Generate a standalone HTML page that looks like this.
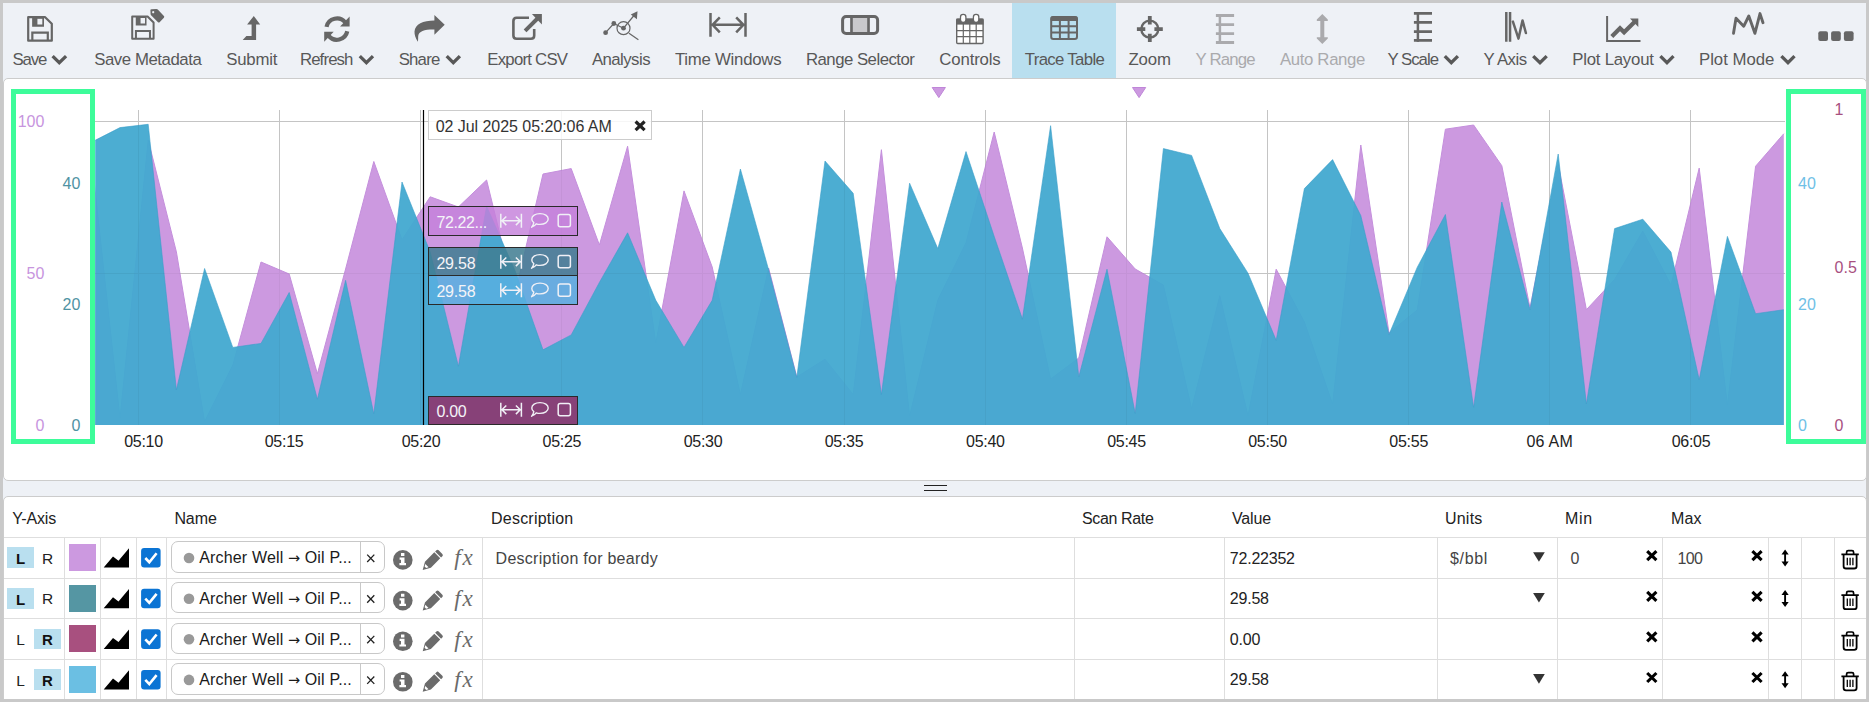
<!DOCTYPE html>
<html><head><meta charset="utf-8"><title>Trend</title>
<style>
html,body{margin:0;padding:0}
body{width:1869px;height:702px;overflow:hidden;background:#c9c9c9;position:relative;font-family:"Liberation Sans", sans-serif;}
.t{position:absolute;white-space:nowrap;line-height:20px;}
.abs{position:absolute}
svg{position:absolute;overflow:visible}
</style></head>
<body>
<div class="abs" style="left:3px;top:3px;width:1863px;height:696px;background:#eef1f6"></div>
<div class="abs" id="chartpanel" style="left:3px;top:78px;width:1864px;height:403px;box-sizing:border-box;background:#fff;border:1px solid #ccc;border-radius:5px;"></div>
<div class="abs" id="tablepanel" style="left:3px;top:496px;width:1864px;height:210px;box-sizing:border-box;background:#fff;border:1px solid #ccc;border-radius:5px 5px 0 0;"></div>
<div class="abs" style="left:924px;top:485px;width:23px;height:1px;background:#222"></div><div class="abs" style="left:924px;top:490px;width:23px;height:1px;background:#222"></div>
<div class="abs" style="left:0;top:699px;width:1869px;height:3px;background:#c9c9c9;z-index:50"></div>
<div class="abs" style="left:1012px;top:3px;width:104px;height:75px;background:#b9dfef"></div>
<svg style="left:0;top:0" width="1869" height="80"><path d="M52.6 56.1 L59.3 62.7 L66.1 56.1" fill="none" stroke="#585858" stroke-width="3.3" stroke-linecap="butt" stroke-linejoin="miter"/></svg>
<svg style="left:0;top:0" width="1869" height="80"><path d="M359.8 56.1 L366.4 62.7 L373.0 56.1" fill="none" stroke="#585858" stroke-width="3.3" stroke-linecap="butt" stroke-linejoin="miter"/></svg>
<svg style="left:0;top:0" width="1869" height="80"><path d="M446.7 56.1 L453.3 62.7 L459.9 56.1" fill="none" stroke="#585858" stroke-width="3.3" stroke-linecap="butt" stroke-linejoin="miter"/></svg>
<svg style="left:0;top:0" width="1869" height="80"><path d="M1444.8 56.1 L1451.3 62.7 L1457.9 56.1" fill="none" stroke="#585858" stroke-width="3.3" stroke-linecap="butt" stroke-linejoin="miter"/></svg>
<svg style="left:0;top:0" width="1869" height="80"><path d="M1533.2 56.1 L1540.0 62.7 L1546.7 56.1" fill="none" stroke="#585858" stroke-width="3.3" stroke-linecap="butt" stroke-linejoin="miter"/></svg>
<svg style="left:0;top:0" width="1869" height="80"><path d="M1660.4 56.1 L1667.0 62.7 L1673.5 56.1" fill="none" stroke="#585858" stroke-width="3.3" stroke-linecap="butt" stroke-linejoin="miter"/></svg>
<svg style="left:0;top:0" width="1869" height="80"><path d="M1781.4 56.1 L1788.0 62.7 L1794.5 56.1" fill="none" stroke="#585858" stroke-width="3.3" stroke-linecap="butt" stroke-linejoin="miter"/></svg>
<svg style="left:0;top:0" width="1869" height="80"><path d="M28.20 17.20 H45.16 L51.80 23.84 V40.70 H28.20 Z" fill="none" stroke="#666" stroke-width="2.20" stroke-linejoin="round"/><path d="M32.13 17.20 H44.00 V26.64 H32.13 Z M37.42 18.67 V24.58 H42.32 V18.67 Z" fill="#666" fill-rule="evenodd"/><path d="M32.33 40.70 V32.62 H47.80 V40.70" fill="none" stroke="#666" stroke-width="2.20"/><path d="M132.20 16.50 H147.58 L153.60 22.52 V38.70 H132.20 Z" fill="none" stroke="#666" stroke-width="2.00" stroke-linejoin="round"/><path d="M135.76 16.50 H146.53 V25.42 H135.76 Z M140.56 17.92 V23.49 H145.01 V17.92 Z" fill="#666" fill-rule="evenodd"/><path d="M135.94 38.70 V31.02 H149.97 V38.70" fill="none" stroke="#666" stroke-width="2.00"/><path d="M150.4 10.3 Q150.3 9.2 151.5 9.2 L156.4 9 Q157.2 9 157.8 9.6 L163.9 16 Q164.7 16.9 163.9 17.7 L159.6 22.2 Q158.8 23 158 22.2 L151.3 15.6 Q150.7 15 150.6 14.2 Z M153.2 11 A1.1 1.1 0 1 0 153.21 11 Z" fill="#666" fill-rule="evenodd"/><path d="M253.8 15.9 L260.2 24.6 H256.1 V40 H242.7 L246.4 36.1 H251.6 V24.6 H247.1 Z" fill="#666"/><path d="M326.53 26.90 A10.60 10.60 0 0 1 345.25 22.57" fill="none" stroke="#666" stroke-width="4.20"/><path d="M347.27 31.30 A10.60 10.60 0 0 1 328.55 35.63" fill="none" stroke="#666" stroke-width="4.20"/><path d="M349.6 16.4 V26.4 H340.1 Z" fill="#666"/><path d="M324.2 41.8 V31.8 H333.7 Z" fill="#666"/><path d="M434.4 15 L444.7 24.8 L434.4 34.8 V29.4 C425 29.2 418.6 31 418.2 36 C418.1 38 418.3 40 417.8 41.8 C415.5 38 414.4 35 414.5 31.6 C415 24 423 20.6 434.4 20.5 Z" fill="#666"/><path d="M529 17.7 H516.6 Q513.4 17.7 513.4 20.9 V35.5 Q513.4 38.7 516.6 38.7 H531 Q534.2 38.7 534.2 35.5 V29.1" fill="none" stroke="#666" stroke-width="2.6"/><path d="M525.1 30.9 L538 18" fill="none" stroke="#666" stroke-width="3.9"/><path d="M531.9 14.1 H541.9 V24.6 Z" fill="#666"/><path d="M605.6 32.7 L613.8 23.5 L623.5 28.2 L634 15.5 M629.0 33.2 L638.4 39.8" fill="none" stroke="#666" stroke-width="1.2"/><circle cx="605.6" cy="32.7" r="2.4" fill="#666"/><circle cx="613.8" cy="23.5" r="2.4" fill="#666"/><circle cx="623.5" cy="28.2" r="2.4" fill="#666"/><circle cx="623.5" cy="28.2" r="6.5" fill="none" stroke="#666" stroke-width="1.2"/><path d="M637.5 11.2 L630.8 14.6 L636.9 19.2 Z" fill="#666"/><path d="M710.5 13 V36.8 M745.5 13 V36.8 M712 24.8 H744 M719.8 17.3 L712.6 24.8 L719.8 32.3 M736.2 17.3 L743.4 24.8 L736.2 32.3" fill="none" stroke="#666" stroke-width="2.5" stroke-linejoin="miter"/><rect x="850.2" y="17" width="19.6" height="16" fill="#c9c9cc"/><rect x="842.6" y="16.5" width="35" height="17" rx="3.5" fill="none" stroke="#666" stroke-width="3"/><path d="M851.5 16.5 V33.5 M868.5 16.5 V33.5" stroke="#666" stroke-width="2.6" fill="none"/><rect x="956.7" y="19.2" width="26.4" height="24.3" rx="1" fill="#fff" stroke="#666" stroke-width="1.4"/><rect x="956.3" y="18.6" width="27.2" height="6" fill="#666"/><path d="M956.7 30.6 H983 M956.7 36.6 H983 M963.3 24 V43.5 M969.8 24 V43.5 M976.2 24 V43.5" stroke="#666" stroke-width="1.2" fill="none"/><rect x="960.5" y="14.3" width="5.4" height="8" rx="2.6" fill="#fff" stroke="#666" stroke-width="1.3"/><rect x="973.4" y="14.3" width="5.4" height="8" rx="2.6" fill="#fff" stroke="#666" stroke-width="1.3"/><rect x="1051.2" y="17.1" width="25.8" height="21.9" rx="2.2" fill="none" stroke="#666" stroke-width="2"/><rect x="1050.6" y="16.3" width="27" height="4.6" rx="1.5" fill="#666"/><path d="M1051 26.3 H1077 M1051 32.6 H1077 M1059.9 20 V39 M1068.6 20 V39" stroke="#666" stroke-width="2" fill="none"/><circle cx="1149.8" cy="29.1" r="8.5" fill="none" stroke="#666" stroke-width="2.4"/><path d="M1149.8 16.1 V24.4 M1149.8 33.8 V41.9 M1136.9 29.1 H1145.3 M1154.4 29.1 H1162.8" stroke="#666" stroke-width="3.8" fill="none"/><path d="M1219.9 14.1 V43.9" stroke="#aaaaad" stroke-width="2.5" fill="none"/><path d="M1215.9 15.55 H1234.1 M1215.9 24.6 H1234.1 M1215.9 33.6 H1234.1 M1215.9 42.5 H1234.1" stroke="#aaaaad" stroke-width="2.9" fill="none"/><path d="M1322.3 14.1 L1327.8 19.6 V21 H1324.3 V37.2 H1327.8 V38.6 L1322.3 44.1 L1316.8 38.6 V37.2 H1320.3 V21 H1316.8 V19.6 Z" fill="#aaaaad"/><path d="M1417.9 12.1 V41.8" stroke="#666" stroke-width="2.5" fill="none"/><path d="M1413.9 13.45 H1432 M1413.9 22.45 H1432 M1413.9 31.55 H1432 M1413.9 40.45 H1432" stroke="#666" stroke-width="2.8" fill="none"/><path d="M1506.3 12.1 V41.8 M1510.05 12.1 V41.8" stroke="#666" stroke-width="2.5" fill="none"/><path d="M1512.9 21.6 L1518.5 38.6 L1522.5 20.4 L1525.9 33" stroke="#666" stroke-width="2.5" fill="none" stroke-linecap="round" stroke-linejoin="round"/><path d="M1607.1 16.1 V40.9 H1640.5" stroke="#666" stroke-width="2" fill="none"/><path d="M1611.8 36.4 L1620 28.2 L1624.1 32.3 L1635 21.6" stroke="#666" stroke-width="4.2" fill="none"/><path d="M1630 18.6 H1638.3 V26.9 Z" fill="#666"/><path d="M1733.5 33.3 L1736 18.3 L1743.7 26.3 L1748.8 16 L1754.9 33.3 L1760 13.6 L1763 22.7" stroke="#666" stroke-width="2.9" fill="none" stroke-linecap="round" stroke-linejoin="round"/><rect x="1818.3" y="31.2" width="9.7" height="9.8" rx="2" fill="#666"/><rect x="1831.1" y="31.2" width="9.7" height="9.8" rx="2" fill="#666"/><rect x="1843.9" y="31.2" width="9.7" height="9.8" rx="2" fill="#666"/></svg>
<div class="abs" style="left:11px;top:89px;width:84px;height:354.5px;box-sizing:border-box;border:5px solid #3dfc9a"></div>
<div class="abs" style="left:1786px;top:89px;width:80px;height:354.5px;box-sizing:border-box;border:5px solid #3dfc9a"></div>
<svg style="left:0;top:0" width="1869" height="480"><path d="M138.5 110 V425 M279.5 110 V425 M420.5 110 V425 M561.5 110 V425 M702.5 110 V425 M844.5 110 V425 M985.5 110 V425 M1126.5 110 V425 M1267.5 110 V425 M1408.5 110 V425 M1549.5 110 V425 M1690.5 110 V425 M95 121.5 H1785 M95 273.5 H1785" stroke="#cccccc" stroke-width="1" fill="none" shape-rendering="crispEdges"/><clipPath id="cp"><rect x="95.2" y="100" width="1689.8" height="325.0"/></clipPath><g clip-path="url(#cp)"><polygon points="91.8,160.0 120.0,418.0 148.2,140.0 176.4,251.9 204.6,421.5 232.8,365.0 261.0,262.0 289.2,274.0 317.4,373.8 345.6,269.0 373.8,161.5 402.0,239.7 430.2,196.8 458.4,207.0 486.6,180.0 514.8,295.0 543.0,174.0 571.2,168.6 599.4,245.0 627.6,146.2 655.8,343.0 684.0,190.9 712.2,267.0 740.4,394.5 768.6,268.0 796.8,377.0 825.0,359.2 853.2,394.5 881.4,149.7 909.6,416.0 937.8,300.0 966.0,242.7 994.2,132.0 1022.4,248.0 1050.6,379.0 1078.8,358.0 1107.0,236.8 1135.2,269.0 1163.4,285.0 1191.6,408.6 1219.8,295.6 1248.0,415.7 1276.2,269.2 1304.4,322.0 1332.6,404.0 1360.8,145.0 1389.0,333.0 1417.2,310.0 1445.4,129.2 1473.6,125.0 1501.8,165.7 1530.0,308.0 1558.2,164.0 1586.4,309.7 1614.6,279.4 1642.8,231.0 1671.0,285.0 1699.2,168.1 1727.4,405.0 1755.6,166.2 1783.8,133.7 1783.8,425.0 91.8,425.0" fill="#cc99e0"/><polyline points="91.8,160.0 120.0,418.0 148.2,140.0 176.4,251.9 204.6,421.5 232.8,365.0 261.0,262.0 289.2,274.0 317.4,373.8 345.6,269.0 373.8,161.5 402.0,239.7 430.2,196.8 458.4,207.0 486.6,180.0 514.8,295.0 543.0,174.0 571.2,168.6 599.4,245.0 627.6,146.2 655.8,343.0 684.0,190.9 712.2,267.0 740.4,394.5 768.6,268.0 796.8,377.0 825.0,359.2 853.2,394.5 881.4,149.7 909.6,416.0 937.8,300.0 966.0,242.7 994.2,132.0 1022.4,248.0 1050.6,379.0 1078.8,358.0 1107.0,236.8 1135.2,269.0 1163.4,285.0 1191.6,408.6 1219.8,295.6 1248.0,415.7 1276.2,269.2 1304.4,322.0 1332.6,404.0 1360.8,145.0 1389.0,333.0 1417.2,310.0 1445.4,129.2 1473.6,125.0 1501.8,165.7 1530.0,308.0 1558.2,164.0 1586.4,309.7 1614.6,279.4 1642.8,231.0 1671.0,285.0 1699.2,168.1 1727.4,405.0 1755.6,166.2 1783.8,133.7" fill="none" stroke="#c48fdc" stroke-width="1"/><polygon points="91.8,142.0 120.0,127.6 148.2,124.3 176.4,389.8 204.6,268.5 232.8,347.4 261.0,343.4 289.2,292.5 317.4,399.2 345.6,280.3 373.8,413.8 402.0,182.0 430.2,252.0 458.4,366.2 486.6,206.2 514.8,270.0 543.0,349.8 571.2,334.9 599.4,282.4 627.6,232.8 655.8,300.3 684.0,347.4 712.2,300.3 740.4,169.0 768.6,269.7 796.8,377.5 825.0,161.0 853.2,193.3 881.4,394.5 909.6,183.2 937.8,248.6 966.0,151.6 994.2,236.4 1022.4,319.1 1050.6,125.7 1078.8,376.8 1107.0,269.2 1135.2,413.3 1163.4,148.6 1191.6,155.4 1219.8,228.6 1248.0,273.2 1276.2,340.3 1304.4,188.6 1332.6,159.6 1360.8,215.6 1389.0,334.5 1417.2,267.4 1445.4,214.5 1473.6,407.4 1501.8,202.0 1530.0,309.7 1558.2,154.0 1586.4,403.9 1614.6,228.6 1642.8,219.2 1671.0,252.1 1699.2,379.7 1727.4,236.4 1755.6,313.7 1783.8,309.7 1783.8,425.0 91.8,425.0" fill="#42a9d0" fill-opacity="0.95"/><polyline points="91.8,142.0 120.0,127.6 148.2,124.3 176.4,389.8 204.6,268.5 232.8,347.4 261.0,343.4 289.2,292.5 317.4,399.2 345.6,280.3 373.8,413.8 402.0,182.0 430.2,252.0 458.4,366.2 486.6,206.2 514.8,270.0 543.0,349.8 571.2,334.9 599.4,282.4 627.6,232.8 655.8,300.3 684.0,347.4 712.2,300.3 740.4,169.0 768.6,269.7 796.8,377.5 825.0,161.0 853.2,193.3 881.4,394.5 909.6,183.2 937.8,248.6 966.0,151.6 994.2,236.4 1022.4,319.1 1050.6,125.7 1078.8,376.8 1107.0,269.2 1135.2,413.3 1163.4,148.6 1191.6,155.4 1219.8,228.6 1248.0,273.2 1276.2,340.3 1304.4,188.6 1332.6,159.6 1360.8,215.6 1389.0,334.5 1417.2,267.4 1445.4,214.5 1473.6,407.4 1501.8,202.0 1530.0,309.7 1558.2,154.0 1586.4,403.9 1614.6,228.6 1642.8,219.2 1671.0,252.1 1699.2,379.7 1727.4,236.4 1755.6,313.7 1783.8,309.7" fill="none" stroke="#3a9fca" stroke-opacity="0.6" stroke-width="1"/></g><path d="M138.5 110 V425 M279.5 110 V425 M420.5 110 V425 M561.5 110 V425 M702.5 110 V425 M844.5 110 V425 M985.5 110 V425 M1126.5 110 V425 M1267.5 110 V425 M1408.5 110 V425 M1549.5 110 V425 M1690.5 110 V425 M95 121.5 H1785 M95 273.5 H1785" stroke="#000" stroke-opacity="0.04" stroke-width="1" fill="none" shape-rendering="crispEdges"/><path d="M932.2 87.5 H945.4 L938.8 97.6 Z" fill="#cc99e0" stroke="#bf86d8" stroke-width="1"/><path d="M1132.5 87.5 H1145.7 L1139.1 97.6 Z" fill="#cc99e0" stroke="#bf86d8" stroke-width="1"/><path d="M423.5 110 V425" stroke="#000" stroke-width="1.2" fill="none"/></svg>
<div class="abs" style="left:428px;top:110px;width:224px;height:30px;box-sizing:border-box;border:1px solid #ccc;background:rgba(255,255,255,0.85)"></div>
<svg style="left:0;top:0" width="1869" height="480"><path d="M635.6 121.5 L644.6 130.1 M644.6 121.5 L635.6 130.1" stroke="#222" stroke-width="3.2" fill="none"/></svg>
<div class="abs" style="left:428px;top:206.0px;width:150px;height:29.6px;box-sizing:border-box;border:1px solid #2a2a2a;background:rgba(196,128,219,0.82)"></div>
<svg style="left:0;top:0" width="1869" height="480"><path d="M500.8 213.8 V227.8 M521.4 213.8 V227.8 M501.5 220.8 H520.7 M506.3 216.5 L502 220.8 L506.3 225.1 M515.9 216.5 L520.2 220.8 L515.9 225.1" stroke="#f0f0f6" stroke-width="1.5" fill="none"/><path d="M540 213.6 C544.8 213.6 548.2 216.0 548.2 219.0 C548.2 222.0 544.8 224.4 540 224.4 C538.6 224.4 537.4 224.2 536.2 223.8 C535 225.4 533.4 226.6 531.6 227.2 C532.8 226.0 533.4 224.6 533.8 222.6 C532.4 221.6 531.8 220.4 531.8 219.0 C531.8 216.0 535.2 213.6 540 213.6 Z" stroke="#f0f0f6" stroke-width="1.4" fill="none" stroke-linejoin="round"/><rect x="558.2" y="214.4" width="12.2" height="12.4" rx="2" fill="none" stroke="#f0f0f6" stroke-width="1.5"/></svg>
<div class="abs" style="left:428px;top:247.0px;width:150px;height:28.6px;box-sizing:border-box;border:1px solid #2a2a2a;background:rgba(64,125,145,0.86)"></div>
<svg style="left:0;top:0" width="1869" height="480"><path d="M500.8 254.8 V268.8 M521.4 254.8 V268.8 M501.5 261.8 H520.7 M506.3 257.5 L502 261.8 L506.3 266.1 M515.9 257.5 L520.2 261.8 L515.9 266.1" stroke="#f0f0f6" stroke-width="1.5" fill="none"/><path d="M540 254.6 C544.8 254.6 548.2 257.0 548.2 260.0 C548.2 263.0 544.8 265.4 540 265.4 C538.6 265.4 537.4 265.2 536.2 264.8 C535 266.4 533.4 267.6 531.6 268.2 C532.8 267.0 533.4 265.6 533.8 263.6 C532.4 262.6 531.8 261.4 531.8 260.0 C531.8 257.0 535.2 254.6 540 254.6 Z" stroke="#f0f0f6" stroke-width="1.4" fill="none" stroke-linejoin="round"/><rect x="558.2" y="255.4" width="12.2" height="12.4" rx="2" fill="none" stroke="#f0f0f6" stroke-width="1.5"/></svg>
<div class="abs" style="left:428px;top:275.3px;width:150px;height:29.3px;box-sizing:border-box;border:1px solid #2a2a2a;background:rgba(88,175,224,0.86)"></div>
<svg style="left:0;top:0" width="1869" height="480"><path d="M500.8 283.3 V297.3 M521.4 283.3 V297.3 M501.5 290.3 H520.7 M506.3 286.0 L502 290.3 L506.3 294.6 M515.9 286.0 L520.2 290.3 L515.9 294.6" stroke="#f0f0f6" stroke-width="1.5" fill="none"/><path d="M540 283.1 C544.8 283.1 548.2 285.5 548.2 288.5 C548.2 291.5 544.8 293.9 540 293.9 C538.6 293.9 537.4 293.7 536.2 293.3 C535 294.9 533.4 296.1 531.6 296.7 C532.8 295.5 533.4 294.1 533.8 292.1 C532.4 291.1 531.8 289.9 531.8 288.5 C531.8 285.5 535.2 283.1 540 283.1 Z" stroke="#f0f0f6" stroke-width="1.4" fill="none" stroke-linejoin="round"/><rect x="558.2" y="283.9" width="12.2" height="12.4" rx="2" fill="none" stroke="#f0f0f6" stroke-width="1.5"/></svg>
<div class="abs" style="left:428px;top:395.5px;width:150px;height:29.0px;box-sizing:border-box;border:1px solid #2a2a2a;background:rgba(137,62,117,0.97)"></div>
<svg style="left:0;top:0" width="1869" height="480"><path d="M500.8 402.8 V416.8 M521.4 402.8 V416.8 M501.5 409.8 H520.7 M506.3 405.5 L502 409.8 L506.3 414.1 M515.9 405.5 L520.2 409.8 L515.9 414.1" stroke="#f0f0f6" stroke-width="1.5" fill="none"/><path d="M540 402.6 C544.8 402.6 548.2 405.0 548.2 408.0 C548.2 411.0 544.8 413.4 540 413.4 C538.6 413.4 537.4 413.2 536.2 412.8 C535 414.4 533.4 415.6 531.6 416.2 C532.8 415.0 533.4 413.6 533.8 411.6 C532.4 410.6 531.8 409.4 531.8 408.0 C531.8 405.0 535.2 402.6 540 402.6 Z" stroke="#f0f0f6" stroke-width="1.4" fill="none" stroke-linejoin="round"/><rect x="558.2" y="403.4" width="12.2" height="12.4" rx="2" fill="none" stroke="#f0f0f6" stroke-width="1.5"/></svg>
<div class="abs" style="left:4px;top:537.0px;width:1862px;height:1px;background:#dedede"></div><div class="abs" style="left:4px;top:578.0px;width:1862px;height:1px;background:#dedede"></div><div class="abs" style="left:4px;top:618.0px;width:1862px;height:1px;background:#dedede"></div><div class="abs" style="left:4px;top:659.0px;width:1862px;height:1px;background:#dedede"></div><div class="abs" style="left:64px;top:538px;width:1px;height:161px;background:#dedede"></div><div class="abs" style="left:100px;top:538px;width:1px;height:161px;background:#dedede"></div><div class="abs" style="left:136px;top:538px;width:1px;height:161px;background:#dedede"></div><div class="abs" style="left:166px;top:538px;width:1px;height:161px;background:#dedede"></div><div class="abs" style="left:482px;top:538px;width:1px;height:161px;background:#dedede"></div><div class="abs" style="left:1074px;top:538px;width:1px;height:161px;background:#dedede"></div><div class="abs" style="left:1224px;top:538px;width:1px;height:161px;background:#dedede"></div><div class="abs" style="left:1437px;top:538px;width:1px;height:161px;background:#dedede"></div><div class="abs" style="left:1557px;top:538px;width:1px;height:161px;background:#dedede"></div><div class="abs" style="left:1662px;top:538px;width:1px;height:161px;background:#dedede"></div><div class="abs" style="left:1768px;top:538px;width:1px;height:161px;background:#dedede"></div><div class="abs" style="left:1801px;top:538px;width:1px;height:161px;background:#dedede"></div><div class="abs" style="left:1834px;top:538px;width:1px;height:161px;background:#dedede"></div>
<div class="abs" style="left:7px;top:547.2px;width:27px;height:20.8px;background:#b9dfef"></div>
<div class="abs" style="left:69px;top:544.1px;width:27px;height:27px;background:#cc99e0"></div>
<div class="abs" style="left:171px;top:541.2px;width:214px;height:31.6px;box-sizing:border-box;border:1px solid #c8c8c8;border-radius:7px"></div>
<div class="abs" style="left:360px;top:542.0px;width:1px;height:30px;background:#c8c8c8"></div>
<div class="abs" style="left:7px;top:587.9px;width:27px;height:20.8px;background:#b9dfef"></div>
<div class="abs" style="left:69px;top:584.8px;width:27px;height:27px;background:#5596a3"></div>
<div class="abs" style="left:171px;top:581.9px;width:214px;height:31.6px;box-sizing:border-box;border:1px solid #c8c8c8;border-radius:7px"></div>
<div class="abs" style="left:360px;top:582.7px;width:1px;height:30px;background:#c8c8c8"></div>
<div class="abs" style="left:34px;top:628.5px;width:27px;height:20.8px;background:#b9dfef"></div>
<div class="abs" style="left:69px;top:625.4px;width:27px;height:27px;background:#a8507f"></div>
<div class="abs" style="left:171px;top:622.5px;width:214px;height:31.6px;box-sizing:border-box;border:1px solid #c8c8c8;border-radius:7px"></div>
<div class="abs" style="left:360px;top:623.3px;width:1px;height:30px;background:#c8c8c8"></div>
<div class="abs" style="left:34px;top:669.1px;width:27px;height:20.8px;background:#b9dfef"></div>
<div class="abs" style="left:69px;top:666.0px;width:27px;height:27px;background:#6bbfe3"></div>
<div class="abs" style="left:171px;top:663.1px;width:214px;height:31.6px;box-sizing:border-box;border:1px solid #c8c8c8;border-radius:7px"></div>
<div class="abs" style="left:360px;top:663.9px;width:1px;height:30px;background:#c8c8c8"></div>
<svg style="left:0;top:0;z-index:5" width="1869" height="702"><path d="M103.7 567.6 L113 556.6 L118.5 560.8 L129 548.3 V567.6 Z" fill="#000"/><rect x="141.1" y="548.0" width="19.5" height="19.6" rx="3" fill="#0b74d4"/><path d="M145.3 558.0 L149.3 562.2 L156.6 553.2" fill="none" stroke="#fff" stroke-width="2.6"/><circle cx="189" cy="558.0" r="5.3" fill="#999"/><path d="M367.2 554.6 L374.3 562.0 M374.3 554.6 L367.2 562.0" stroke="#222" stroke-width="1.3" fill="none"/><circle cx="402.8" cy="559.9" r="9.8" fill="#6b6b6b"/><path d="M401 553.1 h3.4 v3 h-3.4 Z M399.6 557.5 h4.9 v5.6 h1.5 v2.2 h-6.6 v-2.2 h1.6 v-3.4 h-1.4 Z" fill="#fff"/><g transform="translate(431.6 561.0) rotate(45)" fill="#6b6b6b"><path d="M-4.2 -11 q0 -1.6 1.6 -1.6 h5.2 q1.6 0 1.6 1.6 v1.8 h-8.4 Z M-4.2 -8 h8.4 v13.2 l-4.2 7.4 l-4.2 -7.4 Z"/></g><g transform="translate(431.6 561.0) rotate(45)"><path d="M-2.3 6.6 h4.6 l-1.2 2.2 h-2.2 Z" fill="#fff"/></g><path d="M1647.2 551.1 L1656.4 560.1 M1656.4 551.1 L1647.2 560.1" stroke="#000" stroke-width="3.1" fill="none"/><path d="M1752.4 551.1 L1761.6 560.1 M1761.6 551.1 L1752.4 560.1" stroke="#000" stroke-width="3.1" fill="none"/><path d="M1533.1 552.2 H1544.8 L1538.95 561.8 Z" fill="#333"/><path d="M1785.1 551.8 V563.8" stroke="#000" stroke-width="1.9" fill="none"/><path d="M1785.1 549.4 L1788.7 554.4 H1781.5 Z M1785.1 566.4 L1788.7 561.4 H1781.5 Z" fill="#000"/><path d="M1841.4 554.4 H1858.8 M1846.6 554.4 V552.2 Q1846.6 550.7 1848.2 550.7 H1852 Q1853.6 550.7 1853.6 552.2 V554.4" stroke="#000" stroke-width="1.7" fill="none"/><path d="M1843.6 554.8 V566.2 Q1843.6 568.5 1846 568.5 H1854.2 Q1856.6 568.5 1856.6 566.2 V554.8" stroke="#000" stroke-width="1.8" fill="none"/><path d="M1847.3 557.8 V565.2 M1850.1 557.8 V565.2 M1852.9 557.8 V565.2" stroke="#000" stroke-width="1.3" fill="none"/><path d="M103.7 608.3 L113 597.3 L118.5 601.5 L129 589.0 V608.3 Z" fill="#000"/><rect x="141.1" y="588.7" width="19.5" height="19.6" rx="3" fill="#0b74d4"/><path d="M145.3 598.7 L149.3 602.9 L156.6 593.9" fill="none" stroke="#fff" stroke-width="2.6"/><circle cx="189" cy="598.7" r="5.3" fill="#999"/><path d="M367.2 595.3 L374.3 602.7 M374.3 595.3 L367.2 602.7" stroke="#222" stroke-width="1.3" fill="none"/><circle cx="402.8" cy="600.6" r="9.8" fill="#6b6b6b"/><path d="M401 593.8 h3.4 v3 h-3.4 Z M399.6 598.2 h4.9 v5.6 h1.5 v2.2 h-6.6 v-2.2 h1.6 v-3.4 h-1.4 Z" fill="#fff"/><g transform="translate(431.6 601.7) rotate(45)" fill="#6b6b6b"><path d="M-4.2 -11 q0 -1.6 1.6 -1.6 h5.2 q1.6 0 1.6 1.6 v1.8 h-8.4 Z M-4.2 -8 h8.4 v13.2 l-4.2 7.4 l-4.2 -7.4 Z"/></g><g transform="translate(431.6 601.7) rotate(45)"><path d="M-2.3 6.6 h4.6 l-1.2 2.2 h-2.2 Z" fill="#fff"/></g><path d="M1647.2 591.8 L1656.4 600.8 M1656.4 591.8 L1647.2 600.8" stroke="#000" stroke-width="3.1" fill="none"/><path d="M1752.4 591.8 L1761.6 600.8 M1761.6 591.8 L1752.4 600.8" stroke="#000" stroke-width="3.1" fill="none"/><path d="M1533.1 592.9 H1544.8 L1538.95 602.5 Z" fill="#333"/><path d="M1785.1 592.5 V604.5" stroke="#000" stroke-width="1.9" fill="none"/><path d="M1785.1 590.1 L1788.7 595.1 H1781.5 Z M1785.1 607.1 L1788.7 602.1 H1781.5 Z" fill="#000"/><path d="M1841.4 595.1 H1858.8 M1846.6 595.1 V592.9 Q1846.6 591.4 1848.2 591.4 H1852 Q1853.6 591.4 1853.6 592.9 V595.1" stroke="#000" stroke-width="1.7" fill="none"/><path d="M1843.6 595.5 V606.9 Q1843.6 609.2 1846 609.2 H1854.2 Q1856.6 609.2 1856.6 606.9 V595.5" stroke="#000" stroke-width="1.8" fill="none"/><path d="M1847.3 598.5 V605.9 M1850.1 598.5 V605.9 M1852.9 598.5 V605.9" stroke="#000" stroke-width="1.3" fill="none"/><path d="M103.7 648.9 L113 637.9 L118.5 642.1 L129 629.6 V648.9 Z" fill="#000"/><rect x="141.1" y="629.3" width="19.5" height="19.6" rx="3" fill="#0b74d4"/><path d="M145.3 639.3 L149.3 643.5 L156.6 634.5" fill="none" stroke="#fff" stroke-width="2.6"/><circle cx="189" cy="639.3" r="5.3" fill="#999"/><path d="M367.2 635.9 L374.3 643.3 M374.3 635.9 L367.2 643.3" stroke="#222" stroke-width="1.3" fill="none"/><circle cx="402.8" cy="641.2" r="9.8" fill="#6b6b6b"/><path d="M401 634.4 h3.4 v3 h-3.4 Z M399.6 638.8 h4.9 v5.6 h1.5 v2.2 h-6.6 v-2.2 h1.6 v-3.4 h-1.4 Z" fill="#fff"/><g transform="translate(431.6 642.3) rotate(45)" fill="#6b6b6b"><path d="M-4.2 -11 q0 -1.6 1.6 -1.6 h5.2 q1.6 0 1.6 1.6 v1.8 h-8.4 Z M-4.2 -8 h8.4 v13.2 l-4.2 7.4 l-4.2 -7.4 Z"/></g><g transform="translate(431.6 642.3) rotate(45)"><path d="M-2.3 6.6 h4.6 l-1.2 2.2 h-2.2 Z" fill="#fff"/></g><path d="M1647.2 632.4 L1656.4 641.4 M1656.4 632.4 L1647.2 641.4" stroke="#000" stroke-width="3.1" fill="none"/><path d="M1752.4 632.4 L1761.6 641.4 M1761.6 632.4 L1752.4 641.4" stroke="#000" stroke-width="3.1" fill="none"/><path d="M1841.4 635.7 H1858.8 M1846.6 635.7 V633.5 Q1846.6 632.0 1848.2 632.0 H1852 Q1853.6 632.0 1853.6 633.5 V635.7" stroke="#000" stroke-width="1.7" fill="none"/><path d="M1843.6 636.1 V647.5 Q1843.6 649.8 1846 649.8 H1854.2 Q1856.6 649.8 1856.6 647.5 V636.1" stroke="#000" stroke-width="1.8" fill="none"/><path d="M1847.3 639.1 V646.5 M1850.1 639.1 V646.5 M1852.9 639.1 V646.5" stroke="#000" stroke-width="1.3" fill="none"/><path d="M103.7 689.5 L113 678.5 L118.5 682.7 L129 670.2 V689.5 Z" fill="#000"/><rect x="141.1" y="669.9" width="19.5" height="19.6" rx="3" fill="#0b74d4"/><path d="M145.3 679.9 L149.3 684.1 L156.6 675.1" fill="none" stroke="#fff" stroke-width="2.6"/><circle cx="189" cy="679.9" r="5.3" fill="#999"/><path d="M367.2 676.5 L374.3 683.9 M374.3 676.5 L367.2 683.9" stroke="#222" stroke-width="1.3" fill="none"/><circle cx="402.8" cy="681.8" r="9.8" fill="#6b6b6b"/><path d="M401 675.0 h3.4 v3 h-3.4 Z M399.6 679.4 h4.9 v5.6 h1.5 v2.2 h-6.6 v-2.2 h1.6 v-3.4 h-1.4 Z" fill="#fff"/><g transform="translate(431.6 682.9) rotate(45)" fill="#6b6b6b"><path d="M-4.2 -11 q0 -1.6 1.6 -1.6 h5.2 q1.6 0 1.6 1.6 v1.8 h-8.4 Z M-4.2 -8 h8.4 v13.2 l-4.2 7.4 l-4.2 -7.4 Z"/></g><g transform="translate(431.6 682.9) rotate(45)"><path d="M-2.3 6.6 h4.6 l-1.2 2.2 h-2.2 Z" fill="#fff"/></g><path d="M1647.2 673.0 L1656.4 682.0 M1656.4 673.0 L1647.2 682.0" stroke="#000" stroke-width="3.1" fill="none"/><path d="M1752.4 673.0 L1761.6 682.0 M1761.6 673.0 L1752.4 682.0" stroke="#000" stroke-width="3.1" fill="none"/><path d="M1533.1 674.1 H1544.8 L1538.95 683.7 Z" fill="#333"/><path d="M1785.1 673.7 V685.7" stroke="#000" stroke-width="1.9" fill="none"/><path d="M1785.1 671.3 L1788.7 676.3 H1781.5 Z M1785.1 688.3 L1788.7 683.3 H1781.5 Z" fill="#000"/><path d="M1841.4 676.3 H1858.8 M1846.6 676.3 V674.1 Q1846.6 672.6 1848.2 672.6 H1852 Q1853.6 672.6 1853.6 674.1 V676.3" stroke="#000" stroke-width="1.7" fill="none"/><path d="M1843.6 676.7 V688.1 Q1843.6 690.4 1846 690.4 H1854.2 Q1856.6 690.4 1856.6 688.1 V676.7" stroke="#000" stroke-width="1.8" fill="none"/><path d="M1847.3 679.7 V687.1 M1850.1 679.7 V687.1 M1852.9 679.7 V687.1" stroke="#000" stroke-width="1.3" fill="none"/></svg>
<span class="t" id="t1" style="left:12.60px;top:50.08px;font-size:16.8px;color:#585858;letter-spacing:-1.188px;">Save</span>
<span class="t" id="t2" style="left:94.20px;top:50.08px;font-size:16.8px;color:#585858;letter-spacing:-0.438px;">Save Metadata</span>
<span class="t" id="t3" style="left:226.20px;top:50.08px;font-size:16.8px;color:#585858;letter-spacing:-0.189px;">Submit</span>
<span class="t" id="t4" style="left:299.90px;top:50.08px;font-size:16.8px;color:#585858;letter-spacing:-0.867px;">Refresh</span>
<span class="t" id="t5" style="left:398.70px;top:50.08px;font-size:16.8px;color:#585858;letter-spacing:-0.796px;">Share</span>
<span class="t" id="t6" style="left:487.30px;top:50.08px;font-size:16.8px;color:#585858;letter-spacing:-0.767px;">Export CSV</span>
<span class="t" id="t7" style="left:591.90px;top:50.08px;font-size:16.8px;color:#585858;letter-spacing:-0.550px;">Analysis</span>
<span class="t" id="t8" style="left:674.90px;top:50.08px;font-size:16.8px;color:#585858;letter-spacing:-0.242px;">Time Windows</span>
<span class="t" id="t9" style="left:805.90px;top:50.08px;font-size:16.8px;color:#585858;letter-spacing:-0.513px;">Range Selector</span>
<span class="t" id="t10" style="left:939.30px;top:50.08px;font-size:16.8px;color:#585858;letter-spacing:-0.150px;">Controls</span>
<span class="t" id="t11" style="left:1024.80px;top:50.08px;font-size:16.8px;color:#585858;letter-spacing:-0.677px;">Trace Table</span>
<span class="t" id="t12" style="left:1128.40px;top:50.08px;font-size:16.8px;color:#585858;letter-spacing:-0.127px;">Zoom</span>
<span class="t" id="t13" style="left:1195.50px;top:50.08px;font-size:16.8px;color:#aaaaad;letter-spacing:-0.817px;">Y Range</span>
<span class="t" id="t14" style="left:1279.90px;top:50.08px;font-size:16.8px;color:#aaaaad;letter-spacing:-0.344px;">Auto Range</span>
<span class="t" id="t15" style="left:1387.50px;top:50.08px;font-size:16.8px;color:#585858;letter-spacing:-1.004px;">Y Scale</span>
<span class="t" id="t16" style="left:1483.40px;top:50.08px;font-size:16.8px;color:#585858;letter-spacing:-0.538px;">Y Axis</span>
<span class="t" id="t17" style="left:1572.20px;top:50.08px;font-size:16.8px;color:#585858;letter-spacing:-0.224px;">Plot Layout</span>
<span class="t" id="t18" style="left:1699.00px;top:50.08px;font-size:16.8px;color:#585858;letter-spacing:-0.029px;">Plot Mode</span>
<span class="t" id="t19" style="left:44.40px;top:111.96px;font-size:16px;color:#c795de;transform:translateX(-100%);">100</span>
<span class="t" id="t20" style="left:44.40px;top:263.86px;font-size:16px;color:#c795de;transform:translateX(-100%);">50</span>
<span class="t" id="t21" style="left:44.40px;top:415.86px;font-size:16px;color:#c795de;transform:translateX(-100%);">0</span>
<span class="t" id="t22" style="left:80.40px;top:174.06px;font-size:16px;color:#4f93a3;transform:translateX(-100%);">40</span>
<span class="t" id="t23" style="left:80.40px;top:294.86px;font-size:16px;color:#4f93a3;transform:translateX(-100%);">20</span>
<span class="t" id="t24" style="left:80.40px;top:415.86px;font-size:16px;color:#4f93a3;transform:translateX(-100%);">0</span>
<span class="t" id="t25" style="left:1798.00px;top:174.06px;font-size:16px;color:#6fc0e6;">40</span>
<span class="t" id="t26" style="left:1798.00px;top:294.86px;font-size:16px;color:#6fc0e6;">20</span>
<span class="t" id="t27" style="left:1798.00px;top:415.86px;font-size:16px;color:#6fc0e6;">0</span>
<span class="t" id="t28" style="left:1834.60px;top:99.96px;font-size:16px;color:#a8507f;">1</span>
<span class="t" id="t29" style="left:1834.60px;top:258.36px;font-size:16px;color:#a8507f;">0.5</span>
<span class="t" id="t30" style="left:1834.60px;top:415.86px;font-size:16px;color:#a8507f;">0</span>
<span class="t" id="t31" style="left:435.70px;top:116.96px;font-size:16px;color:#333;letter-spacing:-0.045px;">02 Jul 2025 05:20:06 AM</span>
<span class="t" id="t32" style="left:436.40px;top:212.86px;font-size:16px;color:#f4f4f8;letter-spacing:-0.372px;">72.22...</span>
<span class="t" id="t33" style="left:436.40px;top:253.86px;font-size:16px;color:#f4f4f8;letter-spacing:-0.209px;">29.58</span>
<span class="t" id="t34" style="left:436.40px;top:282.36px;font-size:16px;color:#f4f4f8;letter-spacing:-0.209px;">29.58</span>
<span class="t" id="t35" style="left:436.40px;top:401.86px;font-size:16px;color:#f4f4f8;letter-spacing:-0.285px;">0.00</span>
<span class="t" id="t36" style="left:143.50px;top:432.26px;font-size:16px;color:#222;letter-spacing:-0.269px;transform:translateX(-50%);">05:10</span>
<span class="t" id="t37" style="left:284.10px;top:432.26px;font-size:16px;color:#222;letter-spacing:-0.269px;transform:translateX(-50%);">05:15</span>
<span class="t" id="t38" style="left:421.00px;top:432.26px;font-size:16px;color:#222;letter-spacing:-0.269px;transform:translateX(-50%);">05:20</span>
<span class="t" id="t39" style="left:561.90px;top:432.26px;font-size:16px;color:#222;letter-spacing:-0.269px;transform:translateX(-50%);">05:25</span>
<span class="t" id="t40" style="left:703.00px;top:432.26px;font-size:16px;color:#222;letter-spacing:-0.269px;transform:translateX(-50%);">05:30</span>
<span class="t" id="t41" style="left:844.00px;top:432.26px;font-size:16px;color:#222;letter-spacing:-0.269px;transform:translateX(-50%);">05:35</span>
<span class="t" id="t42" style="left:985.40px;top:432.26px;font-size:16px;color:#222;letter-spacing:-0.269px;transform:translateX(-50%);">05:40</span>
<span class="t" id="t43" style="left:1126.50px;top:432.26px;font-size:16px;color:#222;letter-spacing:-0.269px;transform:translateX(-50%);">05:45</span>
<span class="t" id="t44" style="left:1267.60px;top:432.26px;font-size:16px;color:#222;letter-spacing:-0.269px;transform:translateX(-50%);">05:50</span>
<span class="t" id="t45" style="left:1408.70px;top:432.26px;font-size:16px;color:#222;letter-spacing:-0.269px;transform:translateX(-50%);">05:55</span>
<span class="t" id="t46" style="left:1549.70px;top:432.26px;font-size:16px;color:#222;letter-spacing:0.228px;transform:translateX(-50%);">06 AM</span>
<span class="t" id="t47" style="left:1691.00px;top:432.26px;font-size:16px;color:#222;letter-spacing:-0.269px;transform:translateX(-50%);">06:05</span>
<span class="t" id="t48" style="left:12.20px;top:509.06px;font-size:16px;color:#222;letter-spacing:-0.144px;">Y-Axis</span>
<span class="t" id="t49" style="left:174.40px;top:509.06px;font-size:16px;color:#222;letter-spacing:-0.097px;">Name</span>
<span class="t" id="t50" style="left:491.00px;top:509.06px;font-size:16px;color:#222;letter-spacing:0.224px;">Description</span>
<span class="t" id="t51" style="left:1082.00px;top:509.06px;font-size:16px;color:#222;letter-spacing:-0.358px;">Scan Rate</span>
<span class="t" id="t52" style="left:1232.00px;top:509.06px;font-size:16px;color:#222;letter-spacing:-0.147px;">Value</span>
<span class="t" id="t53" style="left:1445.00px;top:509.06px;font-size:16px;color:#222;letter-spacing:0.209px;">Units</span>
<span class="t" id="t54" style="left:1565.00px;top:509.06px;font-size:16px;color:#222;letter-spacing:0.740px;">Min</span>
<span class="t" id="t55" style="left:1671.00px;top:509.06px;font-size:16px;color:#222;letter-spacing:0.089px;">Max</span>
<span class="t" id="t56" style="left:20.50px;top:548.90px;font-size:15px;color:#111;font-weight:bold;transform:translateX(-50%);">L</span>
<span class="t" id="t57" style="left:47.50px;top:548.73px;font-size:15.5px;color:#222;transform:translateX(-50%);">R</span>
<span class="t" id="t58" style="left:199.30px;top:548.26px;font-size:16px;color:#1a1a1a;letter-spacing:0.155px;">Archer Well <span style="font-family:'DejaVu Sans',sans-serif;font-size:14.5px;letter-spacing:0">→</span> Oil P...</span>
<span class="t" id="t59" style="left:454.20px;top:548.33px;font-size:23px;color:#6a6a6a;font-family:'Liberation Serif',serif;"><i>f</i><i style="margin-left:2px">x</i></span>
<span class="t" id="t60" style="left:20.50px;top:589.60px;font-size:15px;color:#111;font-weight:bold;transform:translateX(-50%);">L</span>
<span class="t" id="t61" style="left:47.50px;top:589.43px;font-size:15.5px;color:#222;transform:translateX(-50%);">R</span>
<span class="t" id="t62" style="left:199.30px;top:588.96px;font-size:16px;color:#1a1a1a;letter-spacing:0.155px;">Archer Well <span style="font-family:'DejaVu Sans',sans-serif;font-size:14.5px;letter-spacing:0">→</span> Oil P...</span>
<span class="t" id="t63" style="left:454.20px;top:589.03px;font-size:23px;color:#6a6a6a;font-family:'Liberation Serif',serif;"><i>f</i><i style="margin-left:2px">x</i></span>
<span class="t" id="t64" style="left:20.50px;top:630.03px;font-size:15.5px;color:#222;transform:translateX(-50%);">L</span>
<span class="t" id="t65" style="left:47.50px;top:630.20px;font-size:15px;color:#111;font-weight:bold;transform:translateX(-50%);">R</span>
<span class="t" id="t66" style="left:199.30px;top:629.56px;font-size:16px;color:#1a1a1a;letter-spacing:0.155px;">Archer Well <span style="font-family:'DejaVu Sans',sans-serif;font-size:14.5px;letter-spacing:0">→</span> Oil P...</span>
<span class="t" id="t67" style="left:454.20px;top:629.63px;font-size:23px;color:#6a6a6a;font-family:'Liberation Serif',serif;"><i>f</i><i style="margin-left:2px">x</i></span>
<span class="t" id="t68" style="left:20.50px;top:670.63px;font-size:15.5px;color:#222;transform:translateX(-50%);">L</span>
<span class="t" id="t69" style="left:47.50px;top:670.80px;font-size:15px;color:#111;font-weight:bold;transform:translateX(-50%);">R</span>
<span class="t" id="t70" style="left:199.30px;top:670.16px;font-size:16px;color:#1a1a1a;letter-spacing:0.155px;">Archer Well <span style="font-family:'DejaVu Sans',sans-serif;font-size:14.5px;letter-spacing:0">→</span> Oil P...</span>
<span class="t" id="t71" style="left:454.20px;top:670.23px;font-size:23px;color:#6a6a6a;font-family:'Liberation Serif',serif;"><i>f</i><i style="margin-left:2px">x</i></span>
<span class="t" id="t72" style="left:495.60px;top:548.56px;font-size:16px;color:#444;letter-spacing:0.267px;">Description for beardy</span>
<span class="t" id="t73" style="left:1229.80px;top:548.56px;font-size:16px;color:#222;letter-spacing:-0.217px;">72.22352</span>
<span class="t" id="t74" style="left:1450.00px;top:548.56px;font-size:16px;color:#444;letter-spacing:0.659px;">$/bbl</span>
<span class="t" id="t75" style="left:1570.40px;top:548.76px;font-size:16px;color:#444;">0</span>
<span class="t" id="t76" style="left:1677.40px;top:548.76px;font-size:16px;color:#444;letter-spacing:-0.634px;">100</span>
<span class="t" id="t77" style="left:1229.80px;top:589.26px;font-size:16px;color:#222;letter-spacing:-0.209px;">29.58</span>
<span class="t" id="t78" style="left:1229.80px;top:629.86px;font-size:16px;color:#222;letter-spacing:-0.160px;">0.00</span>
<span class="t" id="t79" style="left:1229.80px;top:670.46px;font-size:16px;color:#222;letter-spacing:-0.209px;">29.58</span>
</body></html>
